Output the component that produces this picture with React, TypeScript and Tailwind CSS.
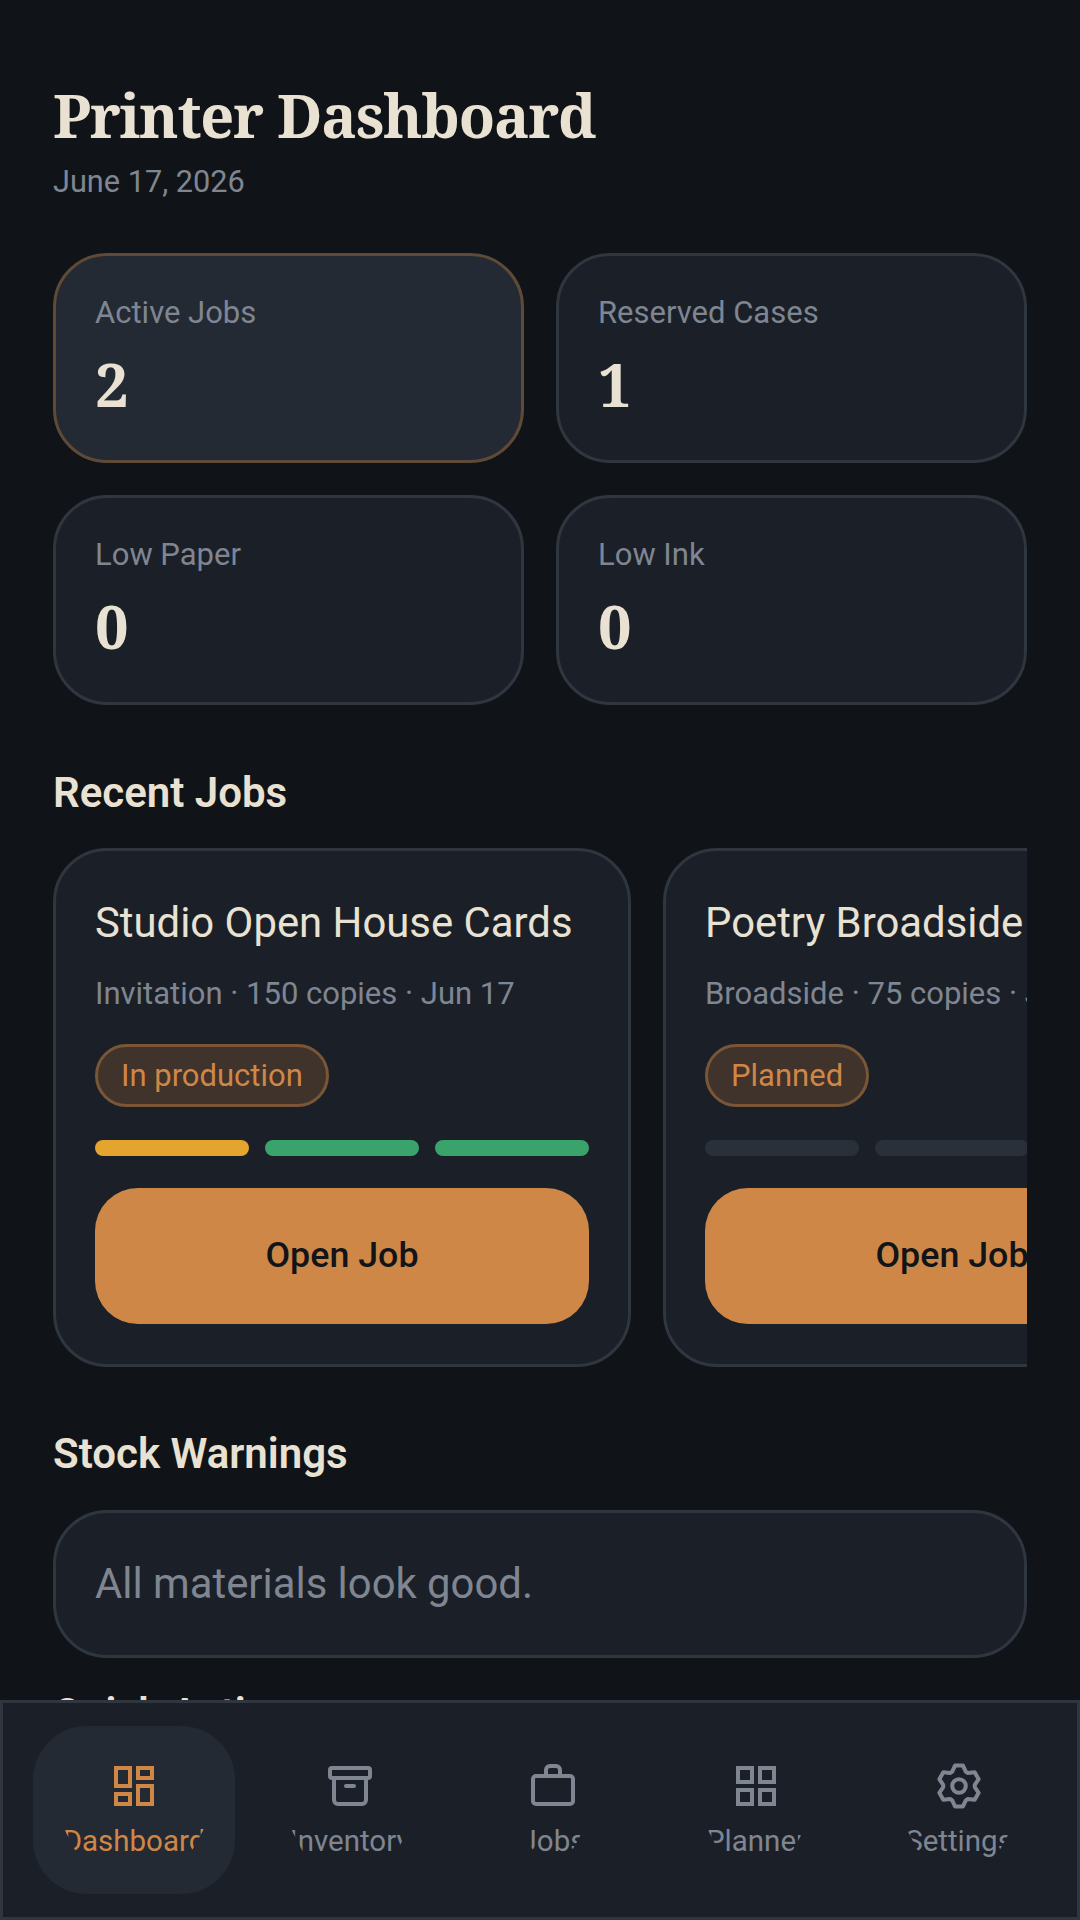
import { Archive } from "lucide-react";

function Stat({ label, value, active }: { label: string; value: string; active?: boolean }) {
  return (
    <div className={`h-[210px] rounded-[54px] border-[3px] pl-[39px] pt-[35px] ${active ? "border-[#5f4a38] bg-[#232a34]" : "border-[#2f363f] bg-[#1b2028]"}`}>
      <div className="text-[31px] leading-[44px] text-[#7f8692]">{label}</div>
      <div className="mt-[9px] font-['Noto_Serif','Liberation_Serif',serif] text-[59.4px] font-bold leading-[80px] text-[#e9e2d3]">{value}</div>
    </div>
  );
}

function Job({ title, meta, status, bars }: { title: string; meta: string; status: string; bars: string[] }) {
  return (
    <div className="h-[519px] w-[578px] shrink-0 rounded-[54px] border-[3px] border-[#2f363f] bg-[#1b2028] px-[39px] pt-[42px]">
      <div className="whitespace-nowrap text-[41.85px] leading-[60px] text-[#e9e2d3]">{title}</div>
      <div className="mt-[19px] whitespace-nowrap text-[31px] leading-[44px] text-[#7f8692]">{meta}</div>
      <div className="mt-[28px] inline-block h-[63px] rounded-full border-[3px] border-[#7a5636] bg-[#3f332b] px-[23px] text-[31px] leading-[57px] text-[#d08746]">{status}</div>
      <div className="mt-[33px] flex gap-[16px]">
        {bars.map((b, i) => (
          <div key={i} className={`h-[16px] w-[154.3px] rounded-full ${b}`} />
        ))}
      </div>
      <div className="mt-[32px] flex h-[136px] w-[494px] items-center justify-center rounded-[43px] bg-[#ce8746] text-[35.8px] font-medium text-[#111418]">Open Job</div>
    </div>
  );
}

function Svg({ children }: { children: React.ReactNode }) {
  return (
    <svg width="48" height="48" viewBox="0 0 24 24" fill="none" stroke="currentColor" strokeWidth="2">
      {children}
    </svg>
  );
}

function DashIcon() {
  return (
    <Svg>
      <rect x="3" y="3" width="7" height="9" /><rect x="14" y="3" width="7" height="5" /><rect x="14" y="12" width="7" height="9" /><rect x="3" y="16" width="7" height="5" />
    </Svg>
  );
}
function GridIcon() {
  return (
    <Svg>
      <rect x="3" y="3" width="7" height="7" /><rect x="14" y="3" width="7" height="7" /><rect x="14" y="14" width="7" height="7" /><rect x="3" y="14" width="7" height="7" />
    </Svg>
  );
}
function CaseIcon() {
  return (
    <Svg>
      <rect x="2" y="7" width="20" height="14" rx="1.5" />
      <path d="M8.5 7V4a2 2 0 0 1 2-2h3a2 2 0 0 1 2 2v3" />
    </Svg>
  );
}

function gearPath() {
  const pts: string[] = [];
  const pt = (r: number, deg: number) => {
    const a = ((deg - 90) * Math.PI) / 180;
    return `${(12 + r * Math.cos(a)).toFixed(2)} ${(12 + r * Math.sin(a)).toFixed(2)}`;
  };
  for (let k = 0; k < 6; k++) {
    const c = k * 60;
    pts.push(pt(7.9, c - 26), pt(10.4, c - 11), pt(10.4, c + 11), pt(7.9, c + 26));
  }
  return "M" + pts.join("L") + "Z";
}
function GearIcon() {
  return (
    <Svg>
      <path d={gearPath()} strokeLinejoin="round" />
      <circle cx="12" cy="12" r="3.4" />
    </Svg>
  );
}

function NavItem({ w, label, icon, active }: { w: string; label: string; icon: React.ReactNode; active?: boolean }) {
  return (
    <div className={`flex h-[168px] flex-col items-center pt-[36px] ${w} ${active ? "rounded-[54px] bg-[#232a34] text-[#d08746]" : "text-[#7f8692]"}`}>
      <div className="h-[48px]">{icon}</div>
      <span className="mt-[16px] inline-block h-[31px] overflow-hidden text-[29.5px] leading-[31px] [clip-path:polygon(0_0,100%_0,calc(100%-2px)_4px,calc(100%-17px)_100%,16px_100%,2px_4px)]">{label}</span>
    </div>
  );
}

export default function App() {
  return (
    <div className="relative h-[1920px] w-[1080px] overflow-hidden bg-[#101418] font-['Roboto',sans-serif]">
      <div className="px-[53px] pt-[78px]">
        <h1 className="font-['Noto_Serif','Liberation_Serif',serif] text-[59.4px] font-bold leading-[74px] tracking-[-1.25px] text-[#e9e2d3]">Printer Dashboard</h1>
        <div className="mt-[8px] text-[30.7px] leading-[44px] text-[#7f8692]">June 17, 2026</div>

        <div className="mt-[49px] grid grid-cols-2 gap-x-[32px] gap-y-[32px]">
          <Stat label="Active Jobs" value="2" active />
          <Stat label="Reserved Cases" value="1" />
          <Stat label="Low Paper" value="0" />
          <Stat label="Low Ink" value="0" />
        </div>

        <h2 className="mt-[63px] text-[42px] font-semibold leading-[50px] text-[#e9e2d3]">Recent Jobs</h2>
        <div className="mt-[30px] flex gap-[32px] overflow-hidden">
          <Job title="Studio Open House Cards" meta="Invitation · 150 copies · Jun 17" status="In production" bars={["bg-[#e3a52d]", "bg-[#3aa36b]", "bg-[#3aa36b]"]} />
          <Job title="Poetry Broadside Series" meta="Broadside · 75 copies · Jun 24" status="Planned" bars={["bg-[#29303a]", "bg-[#29303a]", "bg-[#29303a]"]} />
        </div>

        <h2 className="mt-[62px] text-[42px] font-semibold leading-[50px] text-[#e9e2d3]">Stock Warnings</h2>
        <div className="mt-[31px] flex h-[148px] items-center rounded-[54px] border-[3px] border-[#2f363f] bg-[#1b2028] pl-[39px] text-[41.85px] text-[#7f8692]">All materials look good.</div>
        <h2 className="mt-[31px] text-[42px] font-semibold leading-[50px] text-[#e9e2d3]">Quick Actions</h2>
      </div>

      <nav className="absolute bottom-0 left-0 right-0 flex h-[220px] items-center justify-center border-[3px] border-[#2f363f] bg-[#1b2028]">
        <NavItem w="w-[202px]" label="Dashboard" icon={<DashIcon />} active />
        <NavItem w="w-[230px]" label="Inventory" icon={<Archive size={48} strokeWidth={2} />} />
        <NavItem w="w-[176px]" label="Jobs" icon={<CaseIcon />} />
        <NavItem w="w-[230px]" label="Planner" icon={<GridIcon />} />
        <NavItem w="w-[176px]" label="Settings" icon={<GearIcon />} />
      </nav>
    </div>
  );
}
